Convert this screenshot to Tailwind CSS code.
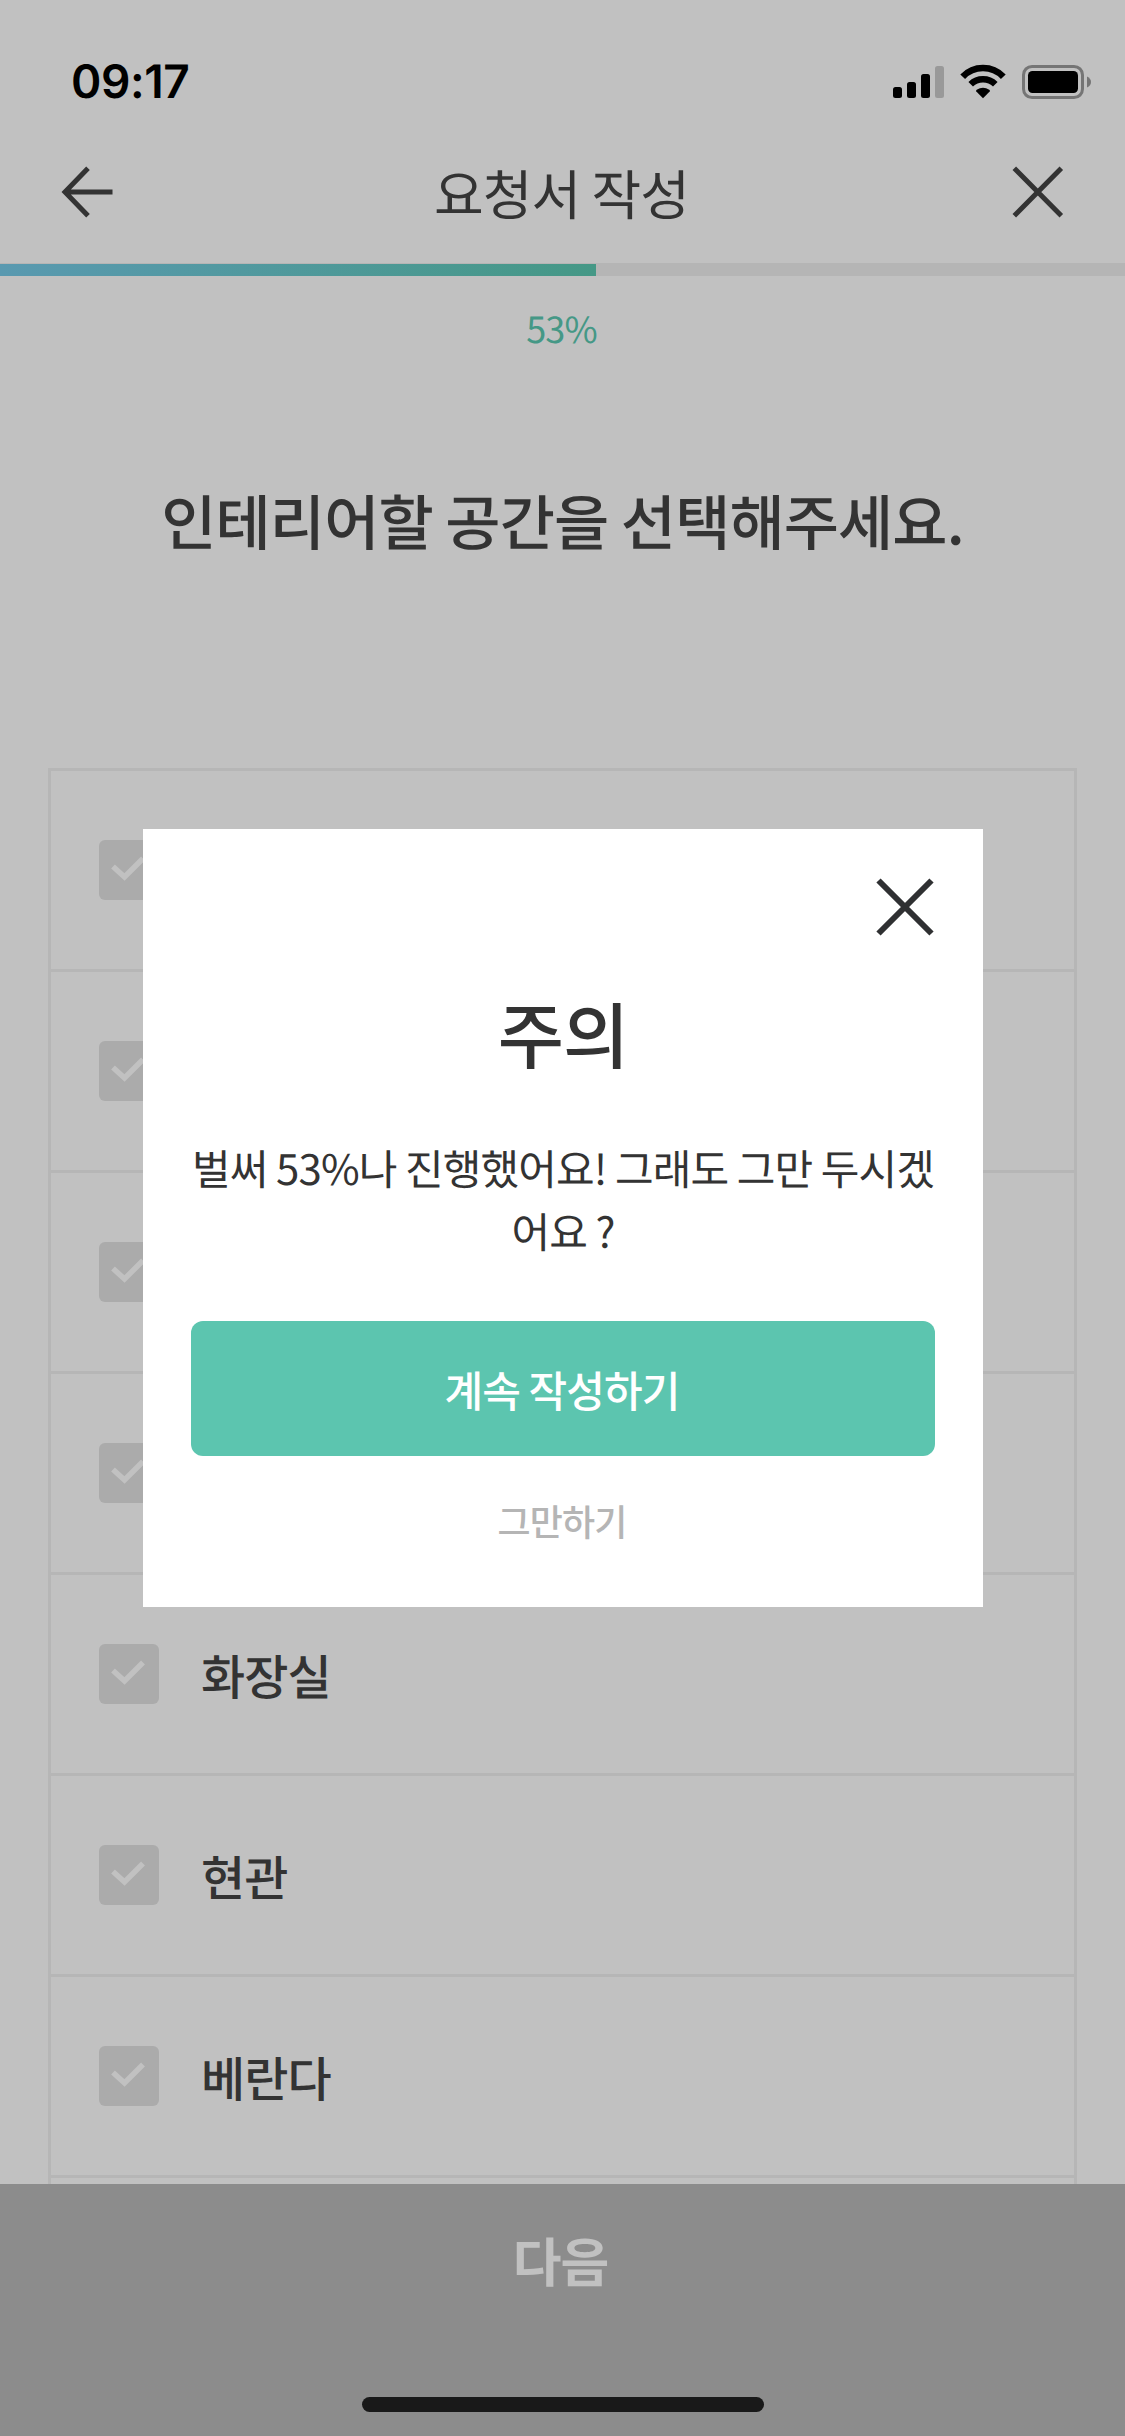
<!DOCTYPE html>
<html lang="ko">
<head>
<meta charset="utf-8">
<title>요청서 작성</title>
<script src="https://cdn.jsdelivr.net/npm/@tailwindcss/browser@4"></script>
</head>
<body class="bg-[#c1c1c1]">
<div class="relative flex h-[2436px] w-[1125px] flex-col overflow-hidden bg-[#c1c1c1] font-['Noto_Sans_CJK_KR',sans-serif] tracking-[-0.9px] text-[#333333] [text-rendering:geometricPrecision]">

  <!-- Status bar -->
  <div class="flex h-[132px] shrink-0 items-start justify-between pt-[54px] pr-[34px] pl-[71px]">
    <span class="font-['Inter',sans-serif] text-[46px] leading-[57px] font-semibold tracking-[-0.4px] text-black">09:17</span>
    <svg class="mt-[8px] h-[40px] w-[200px]" viewBox="891 62 200 40" fill="none">
      <g fill="#000">
        <rect x="893" y="87" width="9" height="11" rx="2.5"/>
        <rect x="907" y="82" width="9" height="16" rx="2.5"/>
        <rect x="921" y="74" width="9" height="24" rx="2.5"/>
        <rect x="935" y="66" width="9" height="32" rx="2.5" fill="#999"/>
        <path d="M983 98.300 L976.300 91.600 Q975.700 90.500 976.700 89.800 Q983 85.600 989.300 89.800 Q990.300 90.500 989.700 91.600 Z"/>
      </g>
      <path d="M970.700 84.200 A17.500 17.500 0 0 1 995.300 84.200" stroke="#000" stroke-width="6.500"/>
      <path d="M962.700 76.700 A28 28 0 0 1 1003.300 76.700" stroke="#000" stroke-width="6.600"/>
      <rect x="1023.500" y="66.400" width="59" height="31.200" rx="8.500" stroke="#757575" stroke-width="3"/>
      <rect x="1028" y="71" width="50" height="22" rx="4.500" fill="#000"/>
      <path d="M1087 76.500 Q1091 78.500 1091 82 Q1091 85.500 1087 87.500 Z" fill="#757575"/>
    </svg>
  </div>

  <!-- Navigation -->
  <header class="flex h-[131px] shrink-0 items-start justify-between pr-[60px] pl-[60px]">
    <svg class="mt-[32px] h-[56px] w-[56px]" viewBox="0 0 56 56" fill="none" stroke="#333333" stroke-width="5"><path d="M28 4.200 L5 28 L28 51.800 M5 28 H52.500"/></svg>
    <h1 class="pr-[2px] text-[54px] leading-[120px] [word-spacing:-0.055em]">요청서 작성</h1>
    <svg class="mt-[32px] h-[56px] w-[56px]" viewBox="0 0 56 56" fill="none" stroke="#333333" stroke-width="5"><path d="M5.300 4.200 L52.300 51.800 M52.300 4.200 L5.300 51.800"/></svg>
  </header>

  <!-- Progress -->
  <div class="h-[13px] shrink-0 bg-[#b5b5b5] pt-px">
    <div class="h-[12px] bg-linear-to-r from-[#5999b0] to-[#459886]" style="width:53%"></div>
  </div>
  <p class="mt-[22px] pr-[2px] text-center text-[36px] leading-[60px] text-[#459886]">53%</p>

  <h2 class="mt-[117px] text-center text-[60px] leading-[90px] font-medium [word-spacing:-0.055em]">인테리어할 공간을 선택해주세요.</h2>

  <!-- Space options -->
  <ul class="mx-[48px] mt-[203px] border-[3px] border-[#b6b6b6]">
    <li class="flex h-[201px] items-center border-b-[3px] border-[#b6b6b6] pl-[48px]"><svg class="size-[60px]" viewBox="0 0 60 60" fill="none"><rect width="60" height="60" rx="6" fill="#ababab"/><path d="M14 26.500 L25.500 37 L44 18.500" stroke="#c1c1c1" stroke-width="5.500"/></svg></li>
    <li class="flex h-[201px] items-center border-b-[3px] border-[#b6b6b6] pl-[48px]"><svg class="size-[60px]" viewBox="0 0 60 60" fill="none"><rect width="60" height="60" rx="6" fill="#ababab"/><path d="M14 26.500 L25.500 37 L44 18.500" stroke="#c1c1c1" stroke-width="5.500"/></svg></li>
    <li class="flex h-[201px] items-center border-b-[3px] border-[#b6b6b6] pl-[48px]"><svg class="size-[60px]" viewBox="0 0 60 60" fill="none"><rect width="60" height="60" rx="6" fill="#ababab"/><path d="M14 26.500 L25.500 37 L44 18.500" stroke="#c1c1c1" stroke-width="5.500"/></svg></li>
    <li class="flex h-[201px] items-center border-b-[3px] border-[#b6b6b6] pl-[48px]"><svg class="size-[60px]" viewBox="0 0 60 60" fill="none"><rect width="60" height="60" rx="6" fill="#ababab"/><path d="M14 26.500 L25.500 37 L44 18.500" stroke="#c1c1c1" stroke-width="5.500"/></svg></li>
    <li class="flex h-[201px] items-center gap-[42px] border-b-[3px] border-[#b6b6b6] pl-[48px]"><svg class="size-[60px]" viewBox="0 0 60 60" fill="none"><rect width="60" height="60" rx="6" fill="#ababab"/><path d="M14 26.500 L25.500 37 L44 18.500" stroke="#c1c1c1" stroke-width="5.500"/></svg><span class="text-[48px] leading-[72px] font-medium">화장실</span></li>
    <li class="flex h-[201px] items-center gap-[42px] border-b-[3px] border-[#b6b6b6] pl-[48px]"><svg class="size-[60px]" viewBox="0 0 60 60" fill="none"><rect width="60" height="60" rx="6" fill="#ababab"/><path d="M14 26.500 L25.500 37 L44 18.500" stroke="#c1c1c1" stroke-width="5.500"/></svg><span class="text-[48px] leading-[72px] font-medium">현관</span></li>
    <li class="flex h-[201px] items-center gap-[42px] border-b-[3px] border-[#b6b6b6] pl-[48px]"><svg class="size-[60px]" viewBox="0 0 60 60" fill="none"><rect width="60" height="60" rx="6" fill="#ababab"/><path d="M14 26.500 L25.500 37 L44 18.500" stroke="#c1c1c1" stroke-width="5.500"/></svg><span class="text-[48px] leading-[72px] font-medium">베란다</span></li>
    <li class="h-[201px]"></li>
  </ul>

  <!-- Bottom button -->
  <footer class="absolute inset-x-0 bottom-0 flex h-[252px] flex-col items-center justify-between bg-[#8c8c8c] pt-[36px] pb-[24px]">
    <span class="pr-[4px] text-[53px] leading-[80px] font-bold text-[#c1c1c1]">다음</span>
    <div class="h-[15px] w-[402px] rounded-full bg-[#191919]"></div>
  </footer>

  <!-- Dialog -->
  <section class="absolute top-[829px] left-[143px] flex h-[778px] w-[840px] flex-col bg-white px-[48px] pt-[48px]">
    <svg class="size-[60px] self-end" viewBox="0 0 60 60" fill="none" stroke="#2f3032" stroke-width="6"><path d="M3.500 3.500 L56.500 56.500 M56.500 3.500 L3.500 56.500"/></svg>
    <h3 class="mt-[45px] text-center text-[72px] leading-[100px] font-medium">주의</h3>
    <p class="mt-[54px] text-center text-[42px] leading-[63px] whitespace-nowrap [word-spacing:-0.055em]">벌써 53%나 진행했어요! 그래도 그만 두시겠<br>어요 ?</p>
    <button class="mt-[59px] h-[135px] shrink-0 rounded-[12px] bg-[#5cc5af] pr-[2px] text-[42px] font-medium text-white [word-spacing:-0.055em]">계속 작성하기</button>
    <button class="mt-[34px] h-[60px] pr-[2px] text-[36px] font-medium text-[#b5b5b5]">그만하기</button>
  </section>
</div>
</body>
</html>
